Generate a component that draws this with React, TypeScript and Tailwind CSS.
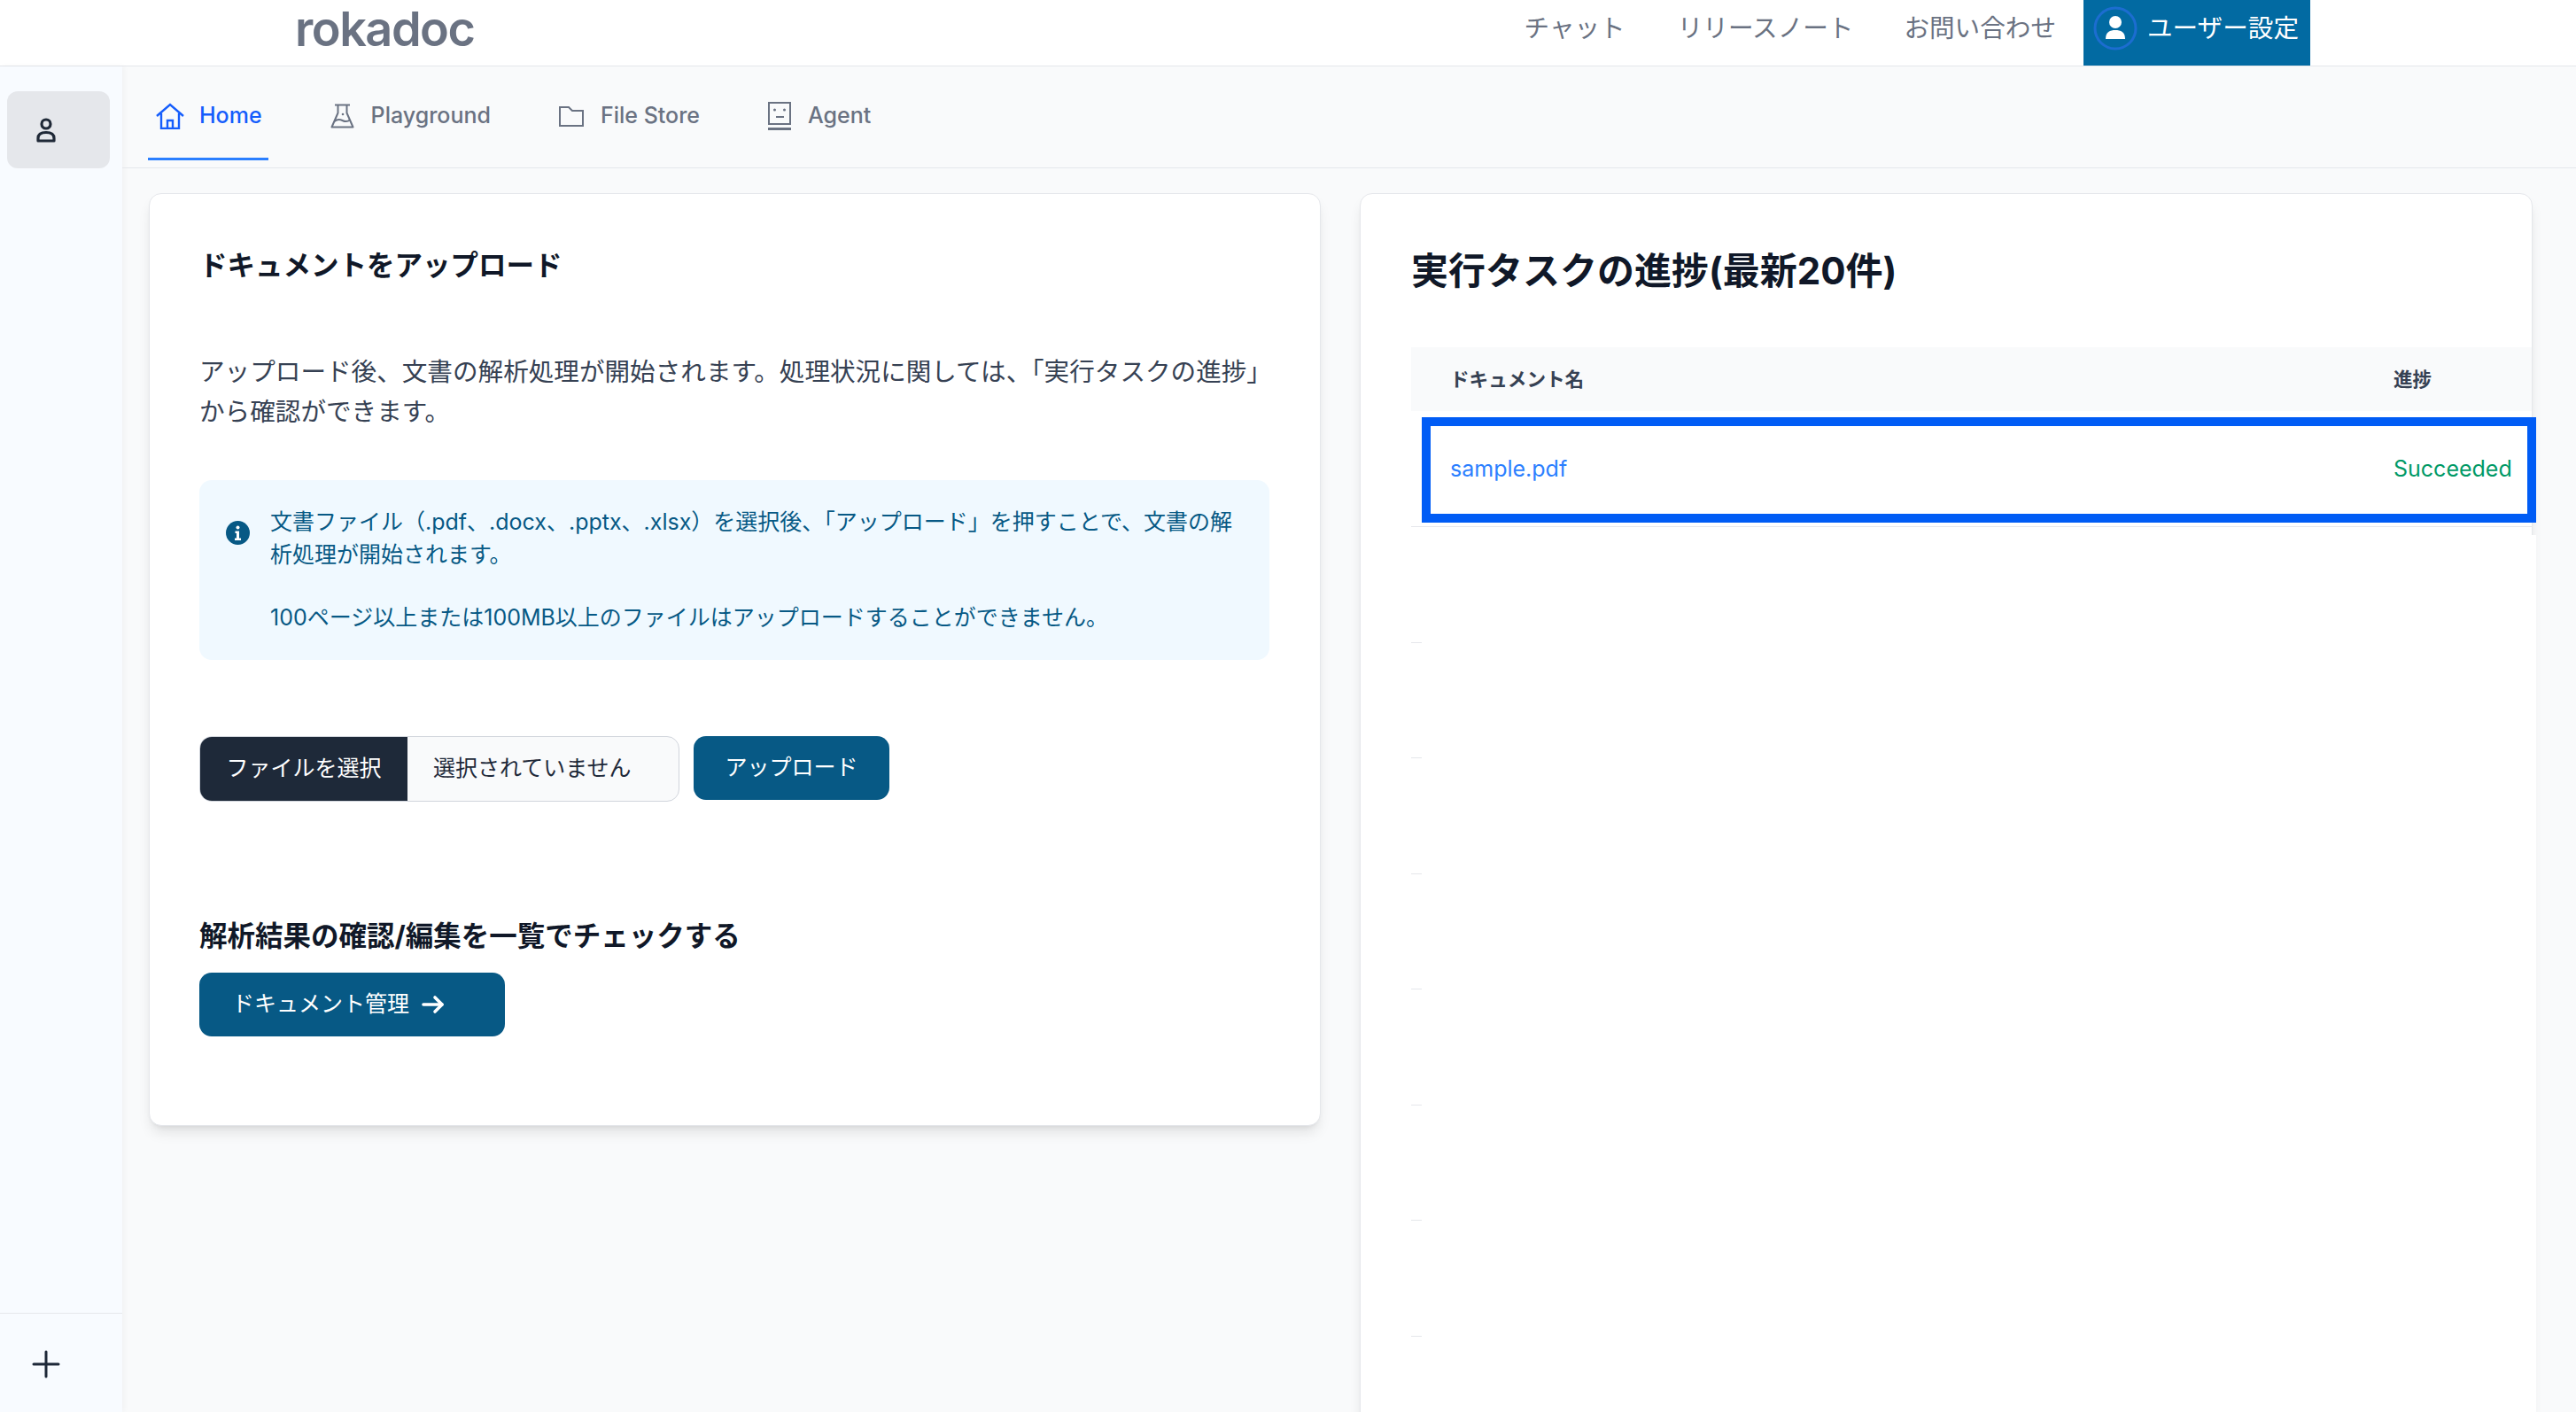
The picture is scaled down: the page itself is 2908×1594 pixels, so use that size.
import { Plus } from 'lucide-react';

const tabs = [
  { label: 'Playground', icon: <FlaskIcon /> },
  { label: 'File Store', icon: <FolderIcon /> },
  { label: 'Agent', icon: <AgentIcon /> },
];

const emptyRows = [1, 2, 3, 4, 5, 6, 7, 8];

function HomeIcon() {
  return (
    <svg viewBox="0 0 32 30" className="h-[30px] w-[32px]" fill="none" stroke="currentColor" strokeWidth="2.4">
      <path d="M1 15 16 2l15 13" />
      <path d="M6 12v17h20V12" />
      <path d="M13 29v-9h6v9" />
    </svg>
  );
}

function FlaskIcon() {
  return (
    <svg viewBox="0 0 27 28" className="h-[28px] w-[27px]" fill="none" stroke="currentColor" strokeWidth="2">
      <path d="M5 1.5h17" />
      <path d="M8.5 1.5v9L1.5 26.5h24l-7-16v-9" strokeLinejoin="round" />
      <path d="M4.5 20c3-2.5 6-2.5 9-1s6 1.5 8.5-.5" />
      <circle cx="14" cy="12" r="1.3" fill="currentColor" stroke="none" />
    </svg>
  );
}

function FolderIcon() {
  return (
    <svg viewBox="0 0 28 23" className="h-[23px] w-[28px]" fill="none" stroke="currentColor" strokeWidth="2">
      <path d="M1 1h10l4 4h12v17H1z" />
    </svg>
  );
}

function AgentIcon() {
  return (
    <svg viewBox="0 0 26 32" className="h-[32px] w-[26px]" fill="none" stroke="currentColor" strokeWidth="2">
      <rect x="1" y="1" width="24" height="24" />
      <circle cx="7.5" cy="9" r="1.5" fill="currentColor" stroke="none" />
      <circle cx="18.5" cy="9" r="1.5" fill="currentColor" stroke="none" />
      <path d="M9 17h9" />
      <path d="M0 30.5h26" strokeWidth="3" />
    </svg>
  );
}

function HeaderUserIcon() {
  return (
    <svg viewBox="0 0 50 52" className="h-[52px] w-[50px]" fill="none">
      <circle cx="25" cy="26" r="23" stroke="#1c6dd0" strokeWidth="3" />
      <circle cx="25" cy="19" r="7" fill="white" />
      <path d="M14 38c0-8 5-10 11-10s11 2 11 10z" fill="white" />
    </svg>
  );
}

function SideUserIcon() {
  return (
    <svg viewBox="0 0 22 28" className="h-[28px] w-[22px]" fill="none" stroke="#1f2937" strokeWidth="3.2">
      <circle cx="11" cy="7" r="5" />
      <path d="M2 23c0-5 4-6.5 9-6.5s9 1.5 9 6.5v3H2z" strokeLinejoin="round" />
    </svg>
  );
}

function InfoIcon() {
  return (
    <svg viewBox="0 0 27 27" className="mt-[17px] h-[27px] w-[27px] shrink-0">
      <circle cx="13.5" cy="13.5" r="13.5" fill="#075985" />
      <circle cx="13.5" cy="7.5" r="2" fill="white" />
      <path d="M10.5 11.5H15v8h2V22h-7v-2.5h2V14h-1.5z" fill="white" />
    </svg>
  );
}

function ArrowIcon() {
  return (
    <svg viewBox="0 0 26 22" className="h-[22px] w-[26px]" fill="none" stroke="white" strokeWidth="3.6" strokeLinecap="round" strokeLinejoin="round">
      <path d="M2 11h21" />
      <path d="M15 3l8 8-8 8" />
    </svg>
  );
}

export default function App() {
  return (
    <div className="flex h-[1594px] w-[2908px] flex-col overflow-hidden bg-[#f9fafb] font-['Inter','Noto_Sans_CJK_JP',sans-serif]">
      <header className="flex h-[75px] shrink-0 items-center justify-between border-b border-gray-200 bg-white pl-[333px] pr-[300px]">
        <span className="pb-[8px] text-[54px] font-semibold leading-[48px] tracking-[-1.5px] text-gray-500">rokadoc</span>
        <nav className="flex h-full items-center text-[28.6px] text-gray-500">
          <a className="mr-[59px] pb-[10px]">チャット</a>
          <a className="mr-[57px] pb-[10px]">リリースノート</a>
          <a className="mr-[31px] pb-[10px]">お問い合わせ</a>
          <a className="flex h-full items-center gap-[11px] bg-[#026aa2] pb-[10px] pl-[11px] pr-[13px] text-white">
            <HeaderUserIcon />
            ユーザー設定
          </a>
        </nav>
      </header>

      <div className="flex min-h-0 flex-1">
        <aside className="flex w-[138px] shrink-0 flex-col bg-[#f8fbff] shadow-[2px_0_6px_rgba(0,0,0,0.04)]">
          <div className="flex-1 px-[8px] pt-[28px]">
            <button className="flex h-[87px] w-[116px] items-center justify-center rounded-[12px] bg-gray-200 pr-[28px]">
              <SideUserIcon />
            </button>
          </div>
          <div className="flex h-[112px] items-center justify-center border-t border-gray-200 pr-[34px] pt-[2px]">
            <Plus className="h-[48px] w-[48px] text-gray-800" strokeWidth={1.5} />
          </div>
        </aside>

        <main className="min-w-0 flex-1">
          <div className="flex h-[115px] items-start border-b border-gray-200 pl-[29px] text-[25px] font-medium text-gray-500">
            <a className="mr-[70px] flex h-[106px] items-center gap-[17px] border-b-[3px] border-blue-500 pl-[9px] pr-[7px] pt-[9px] text-blue-600">
              <HomeIcon />
              Home
            </a>
            {tabs.map((tab) => (
              <a key={tab.label} className="mr-[77px] flex h-[106px] items-center gap-[19px] border-b-[3px] border-transparent pt-[9px]">
                {tab.icon}
                {tab.label}
              </a>
            ))}
          </div>

          <div className="flex items-start gap-[44px] pl-[30px] pr-[49px] pt-[28px]">
            <section className="w-[1323px] shrink-0 rounded-[14px] border border-gray-200 bg-white pb-[100px] pl-[56px] pr-[57px] pt-[59px] shadow-lg">
              <h2 className="text-[31.5px] font-bold leading-[44px] text-gray-900">ドキュメントをアップロード</h2>
              <p className="mt-[76px] text-[28.6px] leading-[44.5px] text-gray-700">
                アップロード後、文書の解析処理が開始されます。処理状況に関しては、「実行タスクの進捗」から確認ができます。
              </p>

              <div className="mt-[55px] flex gap-[23px] rounded-[14px] bg-[#f0f9ff] pb-[29px] pl-[30px] pr-[29px] pt-[29px] text-[25px] leading-[36.5px] text-[#075985]">
                <InfoIcon />
                <div>
                  <p>文書ファイル（.pdf、.docx、.pptx、.xlsx）を選択後、「アップロード」を押すことで、文書の解析処理が開始されます。</p>
                  <p className="mt-[35px]">100ページ以上または100MB以上のファイルはアップロードすることができません。</p>
                </div>
              </div>

              <div className="mt-[86px] flex items-start gap-[16px] text-[25px]">
                <div className="flex h-[74px] w-[542px] items-center overflow-hidden rounded-[14px] border border-gray-300 bg-gray-50 text-gray-800">
                  <span className="flex h-full w-[234px] items-center justify-center bg-gray-800 text-white">ファイルを選択</span>
                  <span className="pl-[29px]">選択されていません</span>
                </div>
                <button className="h-[72px] w-[221px] rounded-[14px] bg-[#075985] text-white">アップロード</button>
              </div>

              <h3 className="mt-[130px] text-[31.5px] font-bold leading-[44px] text-gray-900">解析結果の確認/編集を一覧でチェックする</h3>
              <button className="mt-[19px] flex h-[72px] w-[345px] items-center gap-[14px] rounded-[14px] bg-[#075985] pl-[37px] text-[25px] text-white">
                ドキュメント管理
                <ArrowIcon />
              </button>
            </section>

            <section className="relative h-[1500px] min-w-0 flex-1 rounded-t-[14px] border border-gray-200 bg-white pl-[57px] pt-[64px] shadow-lg">
              <h2 className="text-[42px] font-bold leading-[46px] text-gray-900">実行タスクの進捗(最新20件)</h2>
              <div className="mt-[63px] text-[25px]">
                <div className="flex h-[72px] items-center bg-gray-50 pl-[44px] text-[21.6px] font-semibold text-gray-700">
                  <span className="flex-1">ドキュメント名</span>
                  <span className="w-[156px]">進捗</span>
                </div>
                <div className="flex h-[131px] items-center border-b border-gray-200 pl-[44px] pt-[2px]">
                  <a className="flex-1 text-blue-500">sample.pdf</a>
                  <span className="w-[156px] text-emerald-600">Succeeded</span>
                </div>
                {emptyRows.map((row) => (
                  <div key={row} className="h-[130.5px] border-b border-gray-200" />
                ))}
              </div>
              {/* annotation frame and the white patch under it */}
              <div className="absolute left-[69px] top-[385px] h-[1200px] w-[1258px] bg-white" />
              <div className="absolute left-[69px] top-[252px] h-[119px] w-[1258px] border-[10px] border-[#005cf5]" />
            </section>
          </div>
        </main>
      </div>
    </div>
  );
}
